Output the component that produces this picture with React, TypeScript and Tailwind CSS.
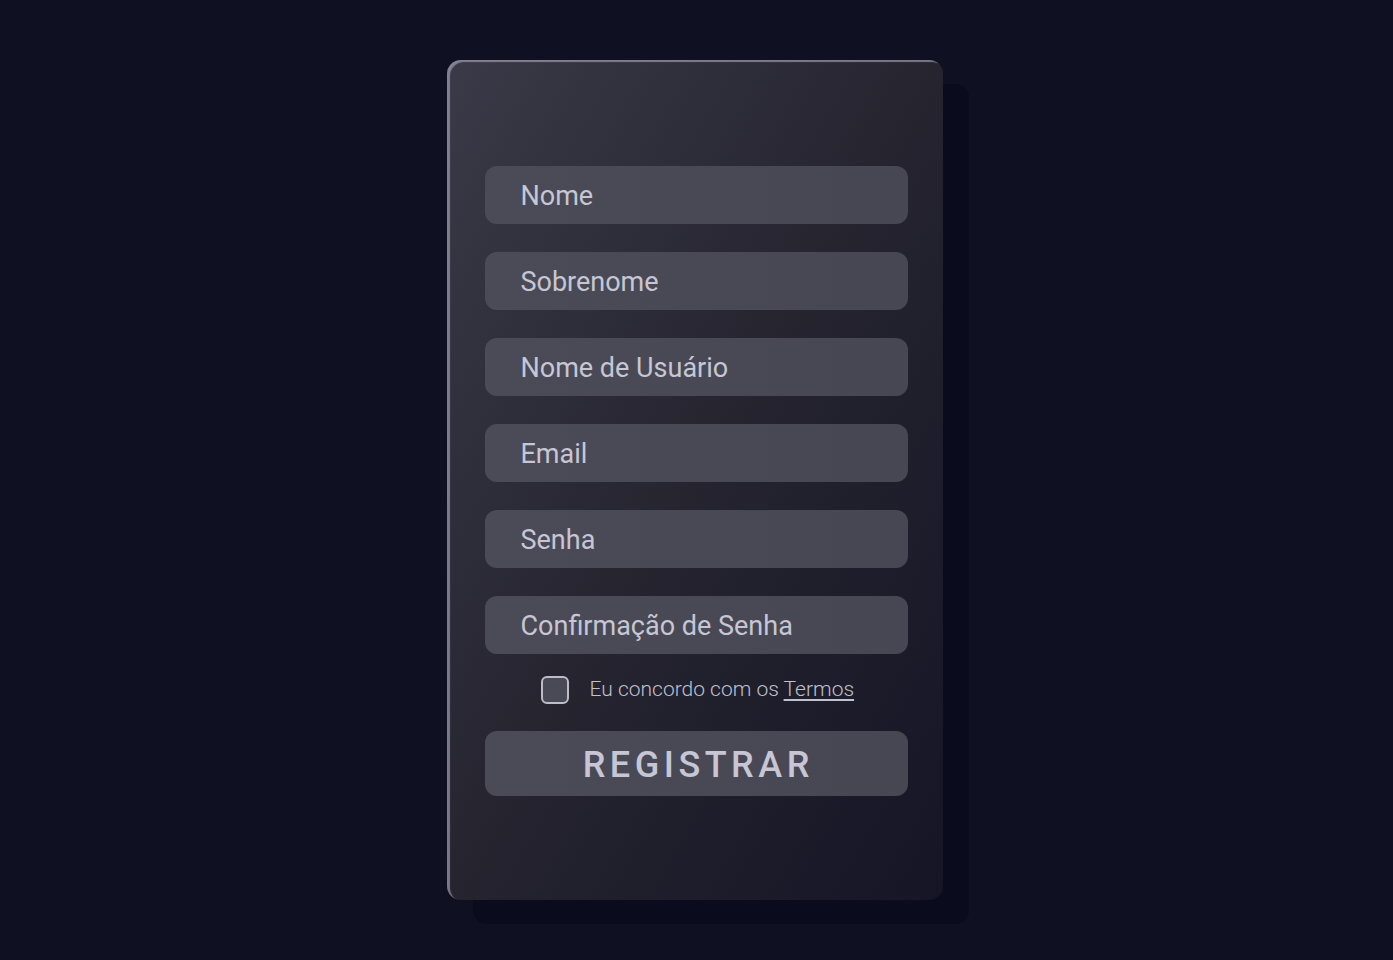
const fields = [
  "Nome",
  "Sobrenome",
  "Nome de Usuário",
  "Email",
  "Senha",
  "Confirmação de Senha",
];

export default function App() {
  return (
    <div
      className="w-full h-[960px] bg-[#0f1022] flex justify-center pt-[60px]"
      style={{ fontFamily: "Roboto, 'Noto Sans', sans-serif" }}
    >
      <div className="w-[496px] h-[840px] mr-[4px] rounded-[14px] bg-gradient-to-br from-[#3a3a48] via-[#25242f] to-[#151526] shadow-[inset_3px_2px_1px_rgba(190,190,210,0.55),26px_24px_0_#0a0c1d] pl-[38px] pt-[106px]">
        <div className="w-[423px] flex flex-col gap-[28px]">
          {fields.map((f) => (
            <div
              key={f}
              className="h-[58px] rounded-[12px] bg-gradient-to-r from-[#4b4b57] to-[#474753] flex items-center pl-[36px] pt-[2px] text-[27px] text-[#c6c6d4]"
            >
              {f}
            </div>
          ))}
        </div>
        <div className="w-[423px] flex items-center mt-[20px] pl-[56px] gap-[21px]">
          <div className="w-[28px] h-[28px] rounded-[6px] border-2 border-[#bdbdca] bg-[#4a4a56]" />
          <span className="text-[21px] font-light text-[#c0c0ce]">
            Eu concordo com os <span className="underline underline-offset-[3px]">Termos</span>
          </span>
        </div>
        <div className="w-[423px] h-[65px] mt-[25px] rounded-[12px] bg-gradient-to-r from-[#4b4b57] to-[#474753] flex items-center justify-center pt-[3px] text-[36px] font-medium tracking-[0.125em] pl-[0.125em] text-[#c6c6d4]">
          REGISTRAR
        </div>
      </div>
    </div>
  );
}
